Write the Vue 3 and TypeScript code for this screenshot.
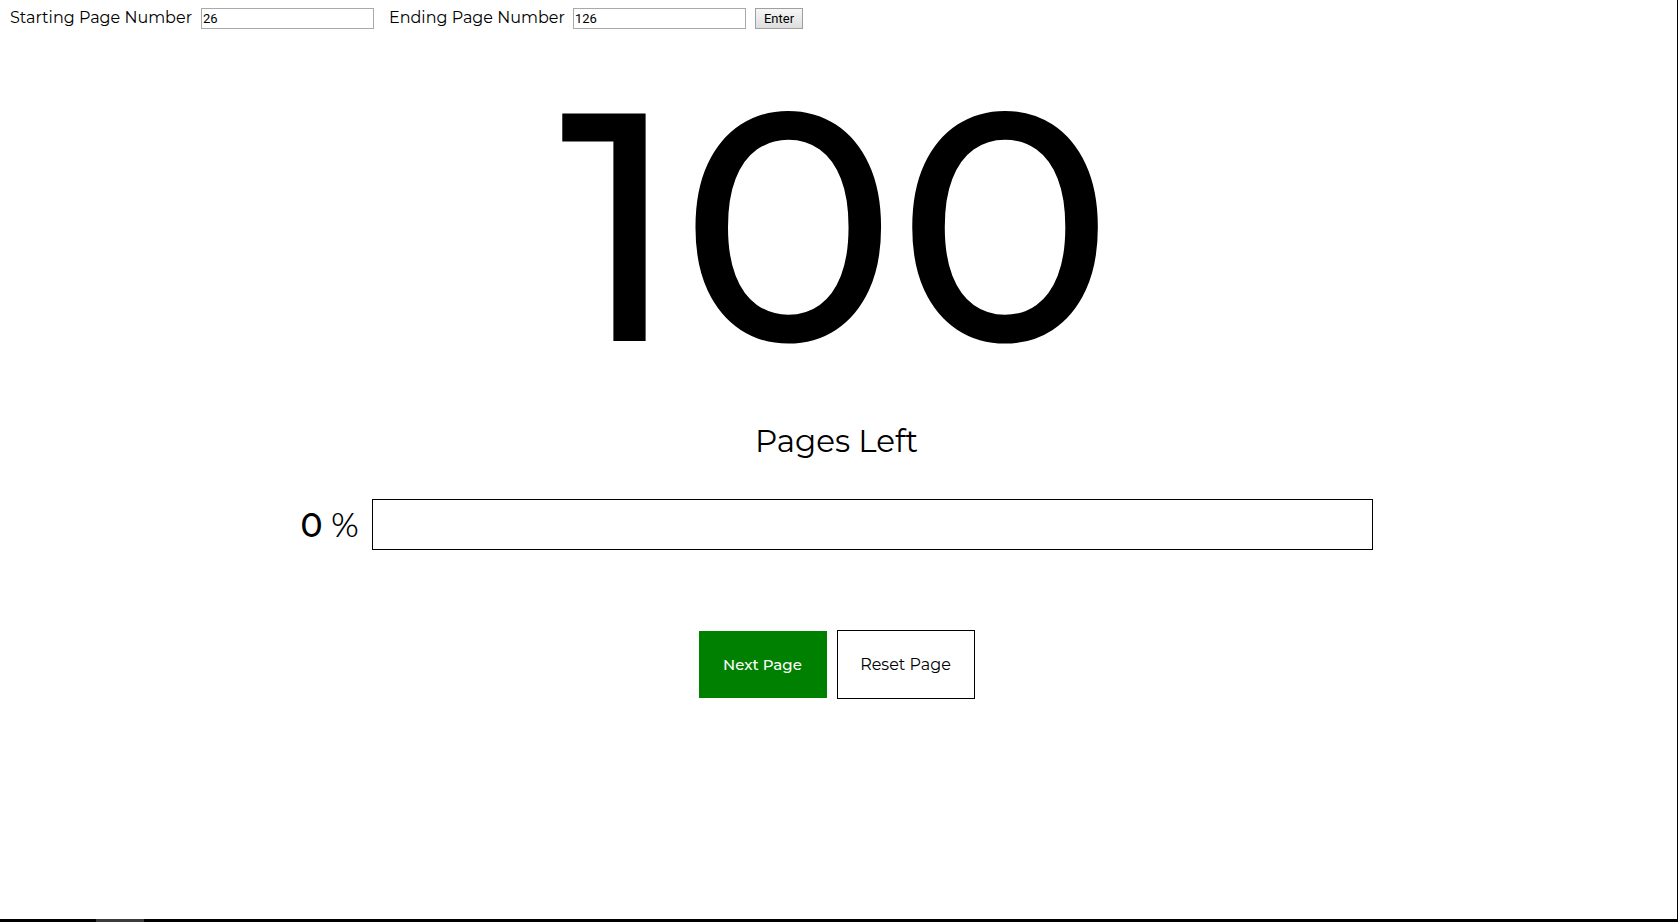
<script setup lang="ts">
import { computed, ref } from 'vue'

const startInput = ref('26')
const endInput = ref('126')
const start = ref(26)
const end = ref(126)
const current = ref(26)

const pagesLeft = computed(() => Math.max(end.value - current.value, 0))
const percent = computed(() => {
  const total = end.value - start.value
  return total > 0 ? Math.round(((current.value - start.value) / total) * 100) : 0
})

function applyRange(): void {
  start.value = Number(startInput.value) || 0
  end.value = Number(endInput.value) || 0
  current.value = start.value
}

function nextPage(): void {
  if (current.value < end.value) current.value++
}

function resetPage(): void {
  current.value = start.value
}
</script>

<template>
  <div class="page">
    <form class="range" @submit.prevent="applyRange">
      <label class="start-label" for="start-page">Starting Page Number</label>
      <input id="start-page" v-model="startInput" type="text" />
      <label class="end-label" for="end-page">Ending Page Number</label>
      <input id="end-page" v-model="endInput" type="text" />
      <button class="enter" type="submit">Enter</button>
    </form>

    <main class="counter">
      <div class="count">{{ pagesLeft }}</div>
      <div class="caption">Pages Left</div>
      <div class="progress">
        <span class="percent"><span class="value">{{ percent }}</span> %</span>
        <div class="track">
          <div class="fill" :style="{ width: percent + '%' }"></div>
        </div>
      </div>
      <div class="actions">
        <button class="next" type="button" @click="nextPage">Next Page</button>
        <button class="reset" type="button" @click="resetPage">Reset Page</button>
      </div>
    </main>

    <div class="edge"><div class="edge-tab"></div></div>
  </div>
</template>

<style>
body {
  margin: 0;
  background: #fff;
}
</style>

<style scoped>
.page {
  box-sizing: border-box;
  display: flex;
  flex-direction: column;
  min-height: 100vh;
  border-right: 1px solid #000;
  color: #000;
  font-family: Montserrat, Inter, sans-serif;
  font-size: 16px;
}

.range {
  display: flex;
  flex-wrap: wrap;
  align-items: center;
  padding: 8px 10px 0;
}

.range label {
  line-height: 18px;
  padding-bottom: 2px;
  white-space: nowrap;
}

.start-label {
  width: 191px;
}

.end-label {
  width: 184px;
  margin-left: 15px;
}

.range input {
  box-sizing: border-box;
  width: 173px;
  height: 21px;
  padding: 1px;
  border: 1px solid #a9a9a9;
  background: #fff;
  color: #000;
  font: 13px Roboto, "Liberation Sans", sans-serif;
}

.enter {
  box-sizing: border-box;
  width: 48px;
  height: 21px;
  margin-left: 9px;
  padding: 0;
  border: 1px solid #a0a0a0;
  background: linear-gradient(#f6f6f6, #dedede);
  color: #000;
  font: 13px Roboto, "Liberation Sans", sans-serif;
}

.counter {
  display: flex;
  flex: 1;
  flex-direction: column;
  align-items: center;
  padding: 0 20px 0 16px;
}

.count {
  font-size: 325px;
  font-weight: 500;
  line-height: 392px;
}

.caption {
  font-size: 31px;
  line-height: 40px;
}

.progress {
  display: flex;
  align-items: center;
  justify-content: center;
  width: 100%;
  margin-top: 38px;
}

.percent {
  min-width: 71px;
  font-size: 33px;
  line-height: 40px;
}

.value {
  font-weight: 500;
}

.track {
  box-sizing: border-box;
  flex: 0 1 1001px;
  height: 51px;
  border: 1px solid #000;
}

.fill {
  height: 100%;
  background: green;
}

.actions {
  display: flex;
  align-items: center;
  gap: 10px;
  margin-top: 80px;
}

.actions button {
  box-sizing: border-box;
  padding: 0;
  font-family: inherit;
  font-size: 16px;
}

.actions .next {
  width: 128px;
  height: 67px;
  border: 0;
  background: green;
  color: #fff;
  font-size: 15px;
  font-weight: 500;
}

.reset {
  width: 138px;
  height: 69px;
  border: 1px solid #000;
  background: #fff;
  color: #000;
}

.edge {
  height: 3px;
  padding-left: 96px;
  background: #000;
}

.edge-tab {
  width: 48px;
  height: 3px;
  background: #3c3c3c;
}
</style>
